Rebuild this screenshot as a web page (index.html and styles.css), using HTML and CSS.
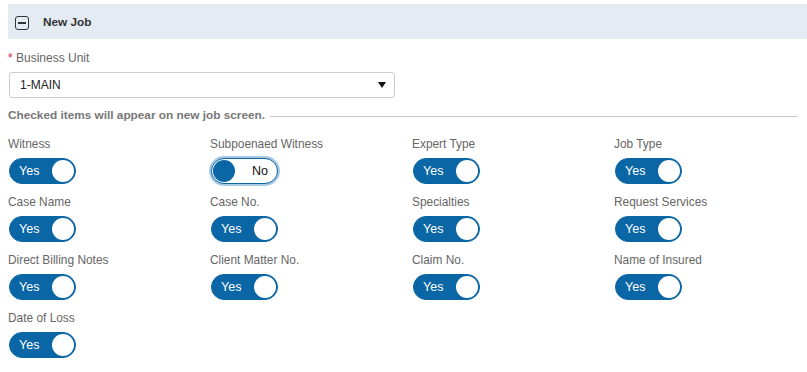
FILE: index.html
```html
<!DOCTYPE html>
<html lang="en">
<head>
    <meta charset="UTF-8">
    <title>New Job</title>
    <link rel="stylesheet" href="styles.css">
</head>
<body>
    <div class="panel-head">
        <span class="collapse-icon"></span>
        <span class="panel-title">New Job</span>
    </div>

    <div class="content">
        <div class="field">
            <label class="field-label"><span class="req">*</span> Business Unit</label>
            <div class="select-box">
                <span>1-MAIN</span>
                <span class="caret"></span>
            </div>
        </div>

        <div class="divider"><span>Checked items will appear on new job screen.</span></div>

        <div class="toggles">
            <div class="toggle-item">
                <div class="toggle-label">Witness</div>
                <div class="switch on"><span class="switch-text">Yes</span><span class="knob"></span></div>
            </div>
            <div class="toggle-item">
                <div class="toggle-label">Subpoenaed Witness</div>
                <div class="switch off focused"><span class="knob"></span><span class="switch-text">No</span></div>
            </div>
            <div class="toggle-item">
                <div class="toggle-label">Expert Type</div>
                <div class="switch on"><span class="switch-text">Yes</span><span class="knob"></span></div>
            </div>
            <div class="toggle-item">
                <div class="toggle-label">Job Type</div>
                <div class="switch on"><span class="switch-text">Yes</span><span class="knob"></span></div>
            </div>

            <div class="toggle-item">
                <div class="toggle-label">Case Name</div>
                <div class="switch on"><span class="switch-text">Yes</span><span class="knob"></span></div>
            </div>
            <div class="toggle-item">
                <div class="toggle-label">Case No.</div>
                <div class="switch on"><span class="switch-text">Yes</span><span class="knob"></span></div>
            </div>
            <div class="toggle-item">
                <div class="toggle-label">Specialties</div>
                <div class="switch on"><span class="switch-text">Yes</span><span class="knob"></span></div>
            </div>
            <div class="toggle-item">
                <div class="toggle-label">Request Services</div>
                <div class="switch on"><span class="switch-text">Yes</span><span class="knob"></span></div>
            </div>

            <div class="toggle-item">
                <div class="toggle-label">Direct Billing Notes</div>
                <div class="switch on"><span class="switch-text">Yes</span><span class="knob"></span></div>
            </div>
            <div class="toggle-item">
                <div class="toggle-label">Client Matter No.</div>
                <div class="switch on"><span class="switch-text">Yes</span><span class="knob"></span></div>
            </div>
            <div class="toggle-item">
                <div class="toggle-label">Claim No.</div>
                <div class="switch on"><span class="switch-text">Yes</span><span class="knob"></span></div>
            </div>
            <div class="toggle-item">
                <div class="toggle-label">Name of Insured</div>
                <div class="switch on"><span class="switch-text">Yes</span><span class="knob"></span></div>
            </div>

            <div class="toggle-item">
                <div class="toggle-label">Date of Loss</div>
                <div class="switch on"><span class="switch-text">Yes</span><span class="knob"></span></div>
            </div>
        </div>
    </div>
</body>
</html>
```

FILE: styles.css
```css
body {
    margin: 0;
    padding: 4px 0 0 8px;
    font-family: "Liberation Sans", Arial, sans-serif;
    font-size: 12px;
    color: #666;
    background: #fff;
}
.panel-head {
    display: flex;
    align-items: center;
    height: 35px;
    background-color: #e4ebf2;
    padding-left: 7px;
}
.collapse-icon {
    position: relative;
    width: 12px;
    height: 12px;
    border: 1.5px solid #333;
    border-radius: 3px;
    margin-top: 2px;
}
.collapse-icon::after {
    content: "";
    position: absolute;
    left: 2px;
    right: 2px;
    top: 5px;
    height: 2px;
    background: #333;
}
.panel-title {
    margin-left: 14px;
    font-weight: bold;
    color: #333;
    font-size: 11.8px;
}
.content {
    width: 790px;
}
.field {
    margin-top: 12px;
}
.field-label {
    display: block;
    line-height: 14px;
}
.req {
    color: #e0242c;
}
.select-box {
    display: flex;
    align-items: center;
    justify-content: space-between;
    width: 366px;
    height: 24px;
    margin: 7px 0 0 1px;
    padding: 0 8px 0 10px;
    border: 1px solid #ccc;
    border-radius: 3px;
    color: #222;
}
.caret {
    width: 0;
    height: 0;
    border-left: 4px solid transparent;
    border-right: 4px solid transparent;
    border-top: 6px solid #111;
}
.divider {
    display: flex;
    align-items: center;
    margin-top: 10px;
    font-weight: bold;
    font-size: 11.8px;
    color: #777;
    line-height: 14px;
}
.divider::after {
    content: "";
    flex: 1;
    height: 1px;
    background: #c8c8c8;
    margin: 2px 0 0 5px;
}
.toggles {
    display: grid;
    grid-template-columns: repeat(4, 202px);
    row-gap: 11px;
    margin-top: 15px;
}
.toggle-label {
    line-height: 14px;
    margin-bottom: 7px;
    font-size: 11.9px;
}
.switch {
    box-sizing: border-box;
    display: flex;
    align-items: center;
    justify-content: space-between;
    width: 67px;
    height: 26px;
    margin-left: 1px;
    border-radius: 13px;
    border: 1px solid #0b66a6;
    padding: 0 1px 0 9px;
}
.switch.on {
    background-color: #0b66a6;
    color: #fff;
}
.switch.off {
    background-color: #fff;
    color: #111;
    padding: 0 9px 0 1px;
}
.switch.focused {
    box-shadow: 0 0 0 2px #a8c8e4;
}
.switch-text {
    font-size: 12.5px;
}
.knob {
    width: 22px;
    height: 22px;
    border-radius: 50%;
    background: #fff;
}
.switch.off .knob {
    background: #0b66a6;
}
```
